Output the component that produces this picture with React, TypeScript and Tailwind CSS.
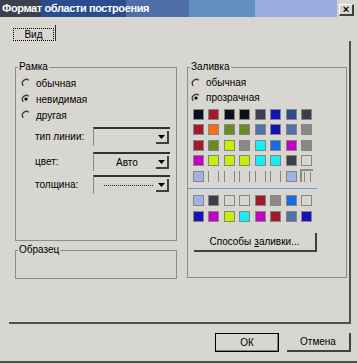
import React from "react";

const row1 = ["#0b1020", "#a31a2a", "#0b1020", "#0b1020", "#3b3f4f", "#1212b8", "#2d4c8c", "#3b3f4b"];
const row2 = ["#a31a2a", "#ff6a12", "#6a8a22", "#6a8a22", "#5171a9", "#1212b0", "#5171a9", "#8a8888"];
const row3 = ["#a31a2a", "#6a8a22", "#c2f200", "#8a8888", "#12f0f0", "#1a6ae8", "#c400c4", "#8a8888"];
const row4 = ["#c400c4", "#c2f200", "#c2f200", "#c2f200", "#12f0f0", "#12f0f0", "#3b3f4b", ""];
const row6 = ["#a0b2e2", "#3b3f4b", "", "", "#a31a2a", "#8a8888", "#1a6ae8", ""];
const row7 = ["#1212b8", "#c400c4", "#c2f200", "#12f0f0", "#c400c4", "#a31a2a", "#5171a9", "#1212b8"];

function Radio({ checked }: { checked?: boolean }) {
  return (
    <svg width="10" height="10" viewBox="0 0 10 10" className="shrink-0">
      <path d="M7.8 2.2 A4 4 0 0 0 2.2 7.8" fill="none" stroke="#404040" strokeWidth="1.4" />
      {checked && <circle cx="5" cy="5" r="1.6" fill="#000" />}
    </svg>
  );
}

function Swatch({ color }: { color: string }) {
  return (
    <div
      className="w-[11px] h-[11px] border border-[#858585]"
      style={{ backgroundColor: color || "transparent" }}
    />
  );
}

function Dropdown({ children }: { children?: React.ReactNode }) {
  return (
    <div className="w-[77px] h-[19px] border-t-2 border-l border-t-[#303030] border-l-[#8a8a8a] flex items-center">
      <div className="flex-1 flex items-center justify-center">{children}</div>
      <div className="w-[13px] h-[13px] mr-[1px] border-r-2 border-b-2 border-[#404040] flex items-center justify-center">
        <svg width="7" height="4" viewBox="0 0 7 4">
          <path d="M0 0 H7 L3.5 4 Z" fill="#000" />
        </svg>
      </div>
    </div>
  );
}

function Group({ label, className, children }: { label: string; className: string; children?: React.ReactNode }) {
  return (
    <div className={`relative border border-[#8c8c8c] ${className}`}>
      <span className="absolute -top-[7px] left-[2px] bg-[#d8d6d0] px-[1px] leading-[12px]">{label}</span>
      {children}
    </div>
  );
}

export default function App() {
  return (
    <div
      className="w-[357px] h-[363px] bg-[#d8d6d0] flex flex-col text-[10px] text-black overflow-hidden"
      style={{ fontFamily: '"Liberation Sans", Arial, sans-serif' }}
    >
      {/* title bar */}
      <div className="h-[17px] flex items-center bg-[linear-gradient(90deg,#3b3f4f_0_41px,#2c4c90_41px_126px,#4f6ea8_126px_189px,#6290be_189px_255px,#9aabdf_255px_337px,#d8d6d0_337px)]">
        <span className="pl-[2px] text-white font-bold text-[11px] tracking-[-0.4px] leading-none flex-1">
          Формат области построения
        </span>
        <div className="w-[15px] h-[12px] mr-[3px] mt-[3px] border-t border-l border-white border-r-2 border-b-2 border-r-[#404040] border-b-[#404040] flex items-center justify-center text-[11px] font-bold leading-none">
          ×
        </div>
      </div>

      {/* tab row */}
      <div className="h-[24px] flex items-end pl-[13px]">
        <div className="flex items-start h-[16px]">
          <div className="mt-[3px] w-[41px] h-[13px] border border-dotted border-black flex items-center justify-center leading-none">
            Вид
          </div>
          <div className="ml-[1px] w-[1px] h-[16px] bg-[#303030]" />
        </div>
      </div>

      {/* tab panel */}
      <div className="ml-[9px] w-[342px] h-[283px] border-r-2 border-b-2 border-[#505050] pt-[26px] pl-[6px] flex gap-[10px]">
        <div className="flex flex-col">
          <Group label="Рамка" className="w-[162px] h-[174px] pt-[7px] pl-[5px]">
            <div className="h-[16px] flex items-center gap-[5px]">
              <Radio />
              <span>обычная</span>
            </div>
            <div className="h-[16px] flex items-center gap-[5px]">
              <Radio checked />
              <span>невидимая</span>
            </div>
            <div className="h-[16px] flex items-center gap-[5px]">
              <Radio />
              <span>другая</span>
            </div>
            <div className="mt-[4px] ml-[14px] flex items-center">
              <span className="w-[58px]">тип линии:</span>
              <Dropdown />
            </div>
            <div className="mt-[6px] ml-[14px] flex items-center">
              <span className="w-[58px]">цвет:</span>
              <Dropdown>
                <span className="pl-[4px]">Авто</span>
              </Dropdown>
            </div>
            <div className="mt-[4px] ml-[14px] flex items-center">
              <span className="w-[58px]">толщина:</span>
              <Dropdown>
                <div className="w-[49px] ml-[6px] border-t border-dotted border-[#202020]" />
              </Dropdown>
            </div>
          </Group>
          <Group label="Образец" className="mt-[9px] w-[162px] h-[29px]" />
        </div>

        <Group label="Заливка" className="w-[160px] h-[211px] pt-[7px]">
          <div className="ml-[3px] h-[15px] flex items-center gap-[5px]">
            <Radio />
            <span>обычная</span>
          </div>
          <div className="ml-[3px] h-[15px] flex items-center gap-[5px]">
            <Radio checked />
            <span>прозрачная</span>
          </div>
          <div className="mt-[4px] ml-[5px] grid grid-cols-[repeat(8,15.43px)] auto-rows-[15.43px]">
            {[...row1, ...row2, ...row3, ...row4].map((c, i) => (
              <Swatch key={i} color={c} />
            ))}
            <Swatch color="#a0b2e2" />
            {[0, 1, 2, 3, 4].map((i) => (
              <div key={`l${i}`} className="w-[11px] h-[11px] border-x border-[#858585]" />
            ))}
            <Swatch color="#a0b2e2" />
            <div className="w-[13px] h-[13px] -mt-[2px] -ml-[1px] border-l-2 border-t-2 border-[#8a8a8a] flex justify-between px-[2px] pt-[1px]">
              <div className="w-[1px] h-[10px] bg-[#8a8a8a]" />
              <div className="w-[1px] h-[10px] bg-[#8a8a8a]" />
            </div>
          </div>
          <div className="mt-[2px] w-[129px] h-[1px] bg-[#6a9ad0]" />
          <div className="mt-[6px] ml-[5px] grid grid-cols-[repeat(8,15.43px)] auto-rows-[15.43px]">
            {[...row6, ...row7].map((c, i) => (
              <Swatch key={i} color={c} />
            ))}
          </div>
          <div className="mt-[7px] ml-[6px] w-[123px] h-[19px] border-r-2 border-b-2 border-[#404040] flex items-center justify-center">
            Способы <span className="underline ml-[3px]">з</span>аливки...
          </div>
        </Group>
      </div>

      {/* buttons */}
      <div className="mt-[9px] flex gap-[8px] pl-[215px]">
        <div className="w-[64px] h-[19px] border border-black shadow-[inset_-1px_-1px_0_#808080] flex items-center justify-center">
          ОК
        </div>
        <div className="w-[64px] h-[19px] border-r-2 border-b-2 border-[#404040] flex items-center justify-center">
          Отмена
        </div>
      </div>
      <div className="mt-[9px] h-[2px] bg-[#505050]" />
    </div>
  );
}
